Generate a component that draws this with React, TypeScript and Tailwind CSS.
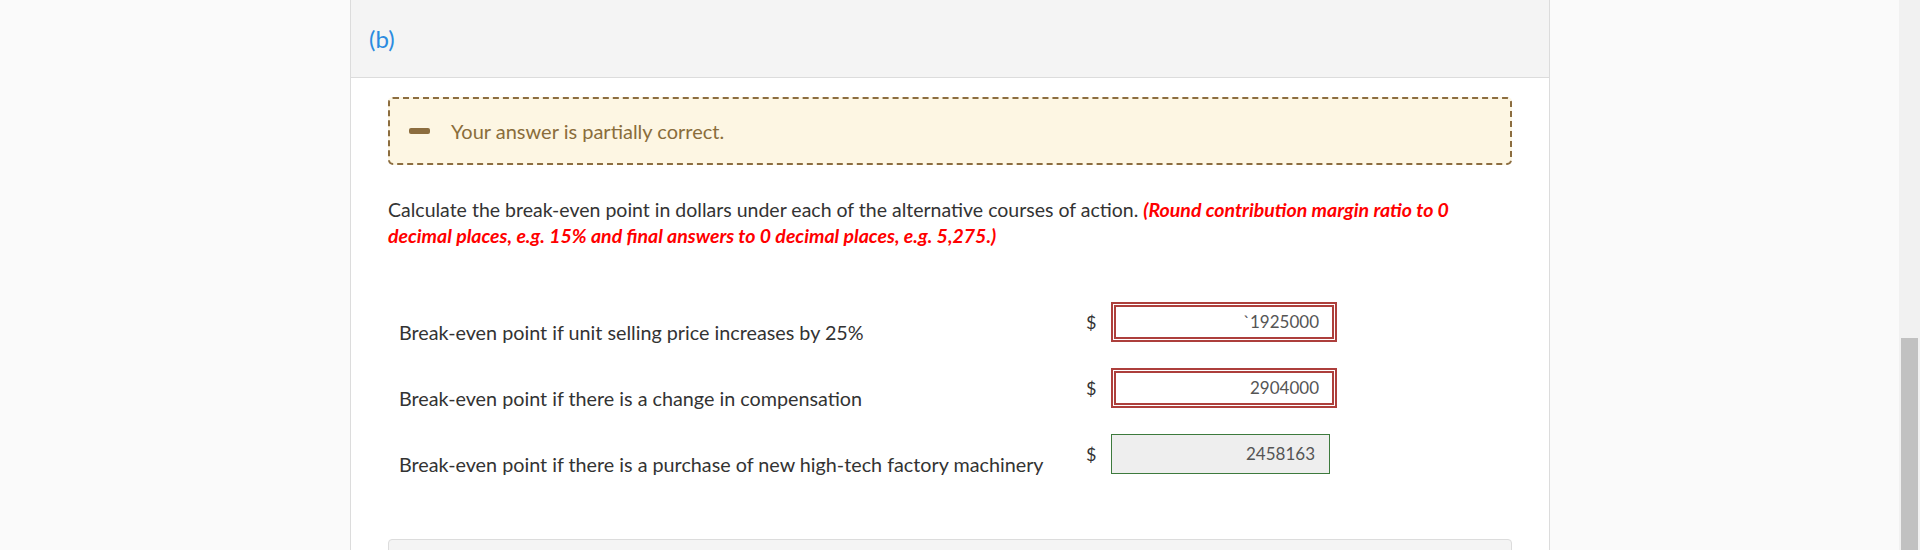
export default function App() {
  const rows = [
    { label: 'Break-even point if unit selling price increases by 25%', value: '`1925000', wrong: true },
    { label: 'Break-even point if there is a change in compensation', value: '2904000', wrong: true },
    { label: 'Break-even point if there is a purchase of new high-tech factory machinery', value: '2458163', wrong: false },
  ];

  return (
    <div className="flex h-[550px] w-full overflow-hidden bg-[#fafafa] font-['Lato',sans-serif] text-[#333]">
      <div className="w-[350px] shrink-0" />

      {/* Question part panel */}
      <div className="flex w-[1200px] shrink-0 flex-col border-x border-[#dcdcdc] bg-white">
        <div className="flex h-[78px] shrink-0 items-center border-b border-[#dcdcdc] bg-[#f4f4f4] pl-[18px]">
          <span className="text-[24px] text-[#2b8be0]">(b)</span>
        </div>

        <div className="px-[37px]">
          <div className="mt-[19px] flex h-[68px] items-center rounded-[5px] border-2 border-dashed border-[#8c6d3f] bg-[#fdf6e3] pl-[19px]">
            <span className="h-[6px] w-[21px] rounded-[2px] bg-[#8c6d3f]" />
            <span className="ml-[21px] text-[20px] text-[#8a6d3b]">Your answer is partially correct.</span>
          </div>

          <p className="mt-[32px] text-[19.5px] leading-[26px] text-[#333]">
            Calculate the break-even point in dollars under each of the alternative courses of action.{' '}
            <span className="font-bold italic text-[#ff0000]">
              (Round contribution margin ratio to 0 decimal places, e.g. 15% and final answers to 0 decimal places, e.g. 5,275.)
            </span>
          </p>

          <div className="mt-[53px] flex flex-col pl-[11px]">
            {rows.map((r, i) => (
              <div key={i} className="flex h-[66px] items-start">
                <div className="w-[687px] pt-[18px] text-[19.75px] leading-[26px]">{r.label}</div>
                <div className="mt-[8px] w-[25px] text-[18px] leading-[24px]">$</div>
                {r.wrong ? (
                  <div className="h-[40px] w-[226px] border-2 border-[#ad3f3c] bg-white p-[1px]">
                    <div className="flex h-full items-center justify-end border-2 border-[#ad3f3c] pr-[13px] text-[17px] text-[#555]">
                      {r.value}
                    </div>
                  </div>
                ) : (
                  <div className="flex h-[40px] w-[219px] items-center justify-end border border-[#3d7a3d] bg-[#eeeeee] pr-[14px] text-[17px] text-[#555]">
                    {r.value}
                  </div>
                )}
              </div>
            ))}
          </div>

          <div className="mt-[39px] h-[40px] rounded-t-[4px] border border-[#dcdcdc] bg-[#f4f4f4]" />
        </div>
      </div>

      <div className="flex-1" />

      {/* scrollbar */}
      <div className="flex w-[21px] shrink-0 flex-col bg-[#f1f1f1] pt-[338px]">
        <div className="ml-[2px] mr-[2px] flex-1 bg-[#c1c1c1]" />
      </div>
    </div>
  );
}
